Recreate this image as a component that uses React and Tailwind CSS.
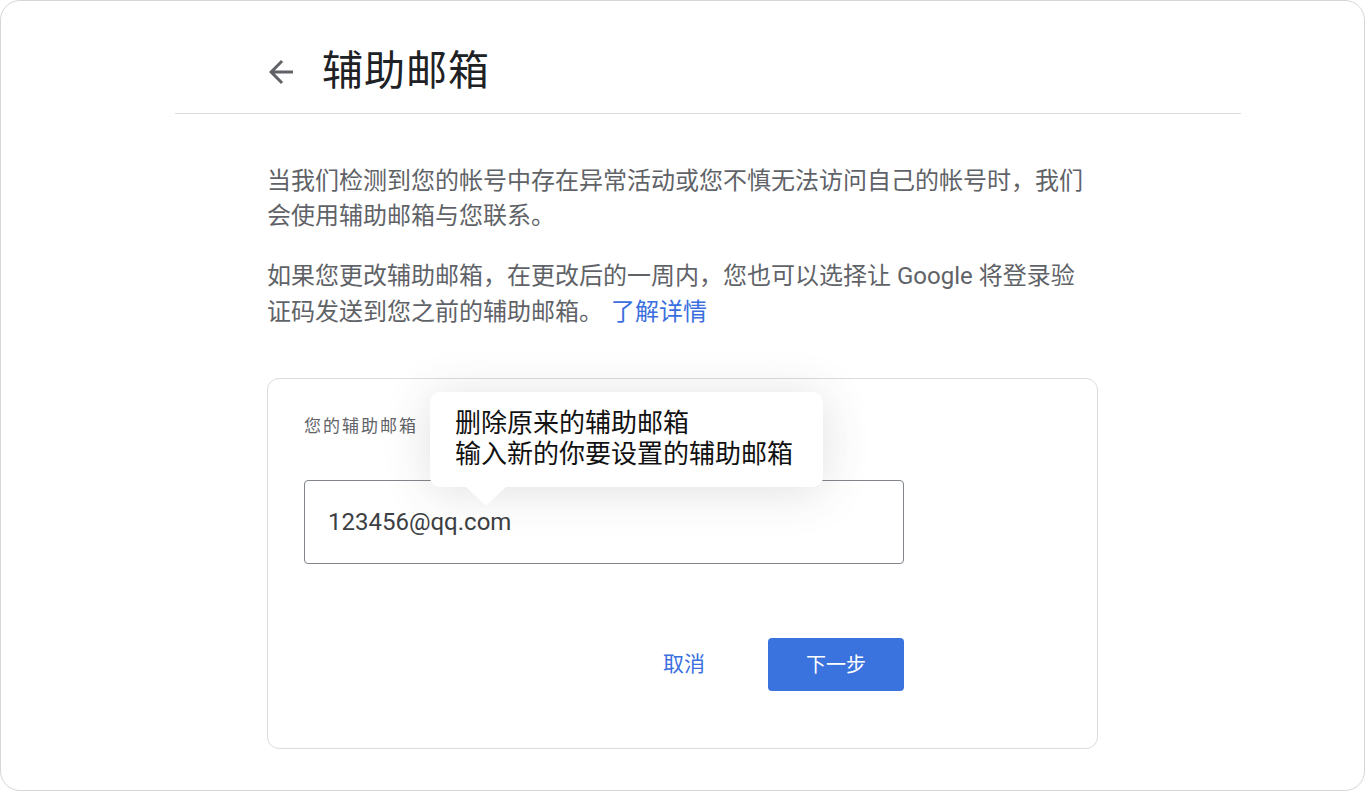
const fontStack = 'font-["Roboto","Noto_Sans_CJK_SC",sans-serif]';

const BackArrow = () => (
  <svg width="36" height="36" viewBox="0 0 24 24" className="fill-[#5f6368]">
    <path d="M20 11H7.83l5.59-5.59L12 4l-8 8 8 8 1.41-1.41L7.83 13H20v-2z" />
  </svg>
);

const App = () => {
  return (
    <div className={`h-[791px] w-full bg-white ${fontStack}`}>
      <div className="h-[791px] w-full rounded-[20px] border border-[#d6d6d6] bg-white overflow-hidden">
        {/* Header */}
        <div className="ml-[174px] w-[1066px] h-[113px] border-b border-[#dadce0] flex items-center pt-[29px] pl-[88px]">
          <BackArrow />
          <h1 className="ml-[23px] text-[41px] leading-none text-[#202124] tracking-[1px]">辅助邮箱</h1>
        </div>

        {/* Content */}
        <div className="mx-auto w-[831px] pt-[50px]">
          <p className="text-[24px] leading-[35px] text-[#5f6368]">
            当我们检测到您的帐号中存在异常活动或您不慎无法访问自己的帐号时，我们会使用辅助邮箱与您联系。
          </p>
          <p className="mt-[24px] text-[24px] leading-[36px] text-[#5f6368]">
            如果您更改辅助邮箱，在更改后的一周内，您也可以选择让 Google 将登录验证码发送到您之前的辅助邮箱。<a href="#" className="ml-[8px] text-[#3b6fe0]">了解详情</a>
          </p>

          {/* Card */}
          <div className="relative mt-[48px] h-[371px] rounded-[12px] border border-[#dadce0] px-[36px] pt-[36px]">
            <div className="text-[17px] leading-[22px] tracking-[2px] text-[#5f6368]">您的辅助邮箱</div>
            <div className="mt-[43px] w-[600px] h-[84px] rounded-[4px] border border-[#80868b] flex items-center px-[23px]">
              <span className="text-[24px] text-[#3c4043]">123456@qq.com</span>
            </div>
            <div className="w-[600px] mt-[74px] flex items-center justify-end">
              <button className="text-[21px] text-[#3b6fe0] mr-[63px]">取消</button>
              <button className="w-[136px] h-[53px] rounded-[4px] bg-[#3b73de] text-white text-[20px]">下一步</button>
            </div>

            {/* Tooltip */}
            <div className="absolute left-[162px] top-[13px] w-[393px] h-[95px] rounded-[10px] bg-white shadow-[0_4px_48px_rgba(60,64,67,0.16)] pl-[25px] pt-[16px]">
              <div className="text-[26px] leading-[31px] text-[#111111]">
                删除原来的辅助邮箱
                <br />
                输入新的你要设置的辅助邮箱
              </div>
              <div className="absolute left-[35px] top-[94px] h-0 w-0 border-l-[21px] border-r-[21px] border-t-[20px] border-l-transparent border-r-transparent border-t-white" />
            </div>
          </div>
        </div>
      </div>
    </div>
  );
};

export default App;
